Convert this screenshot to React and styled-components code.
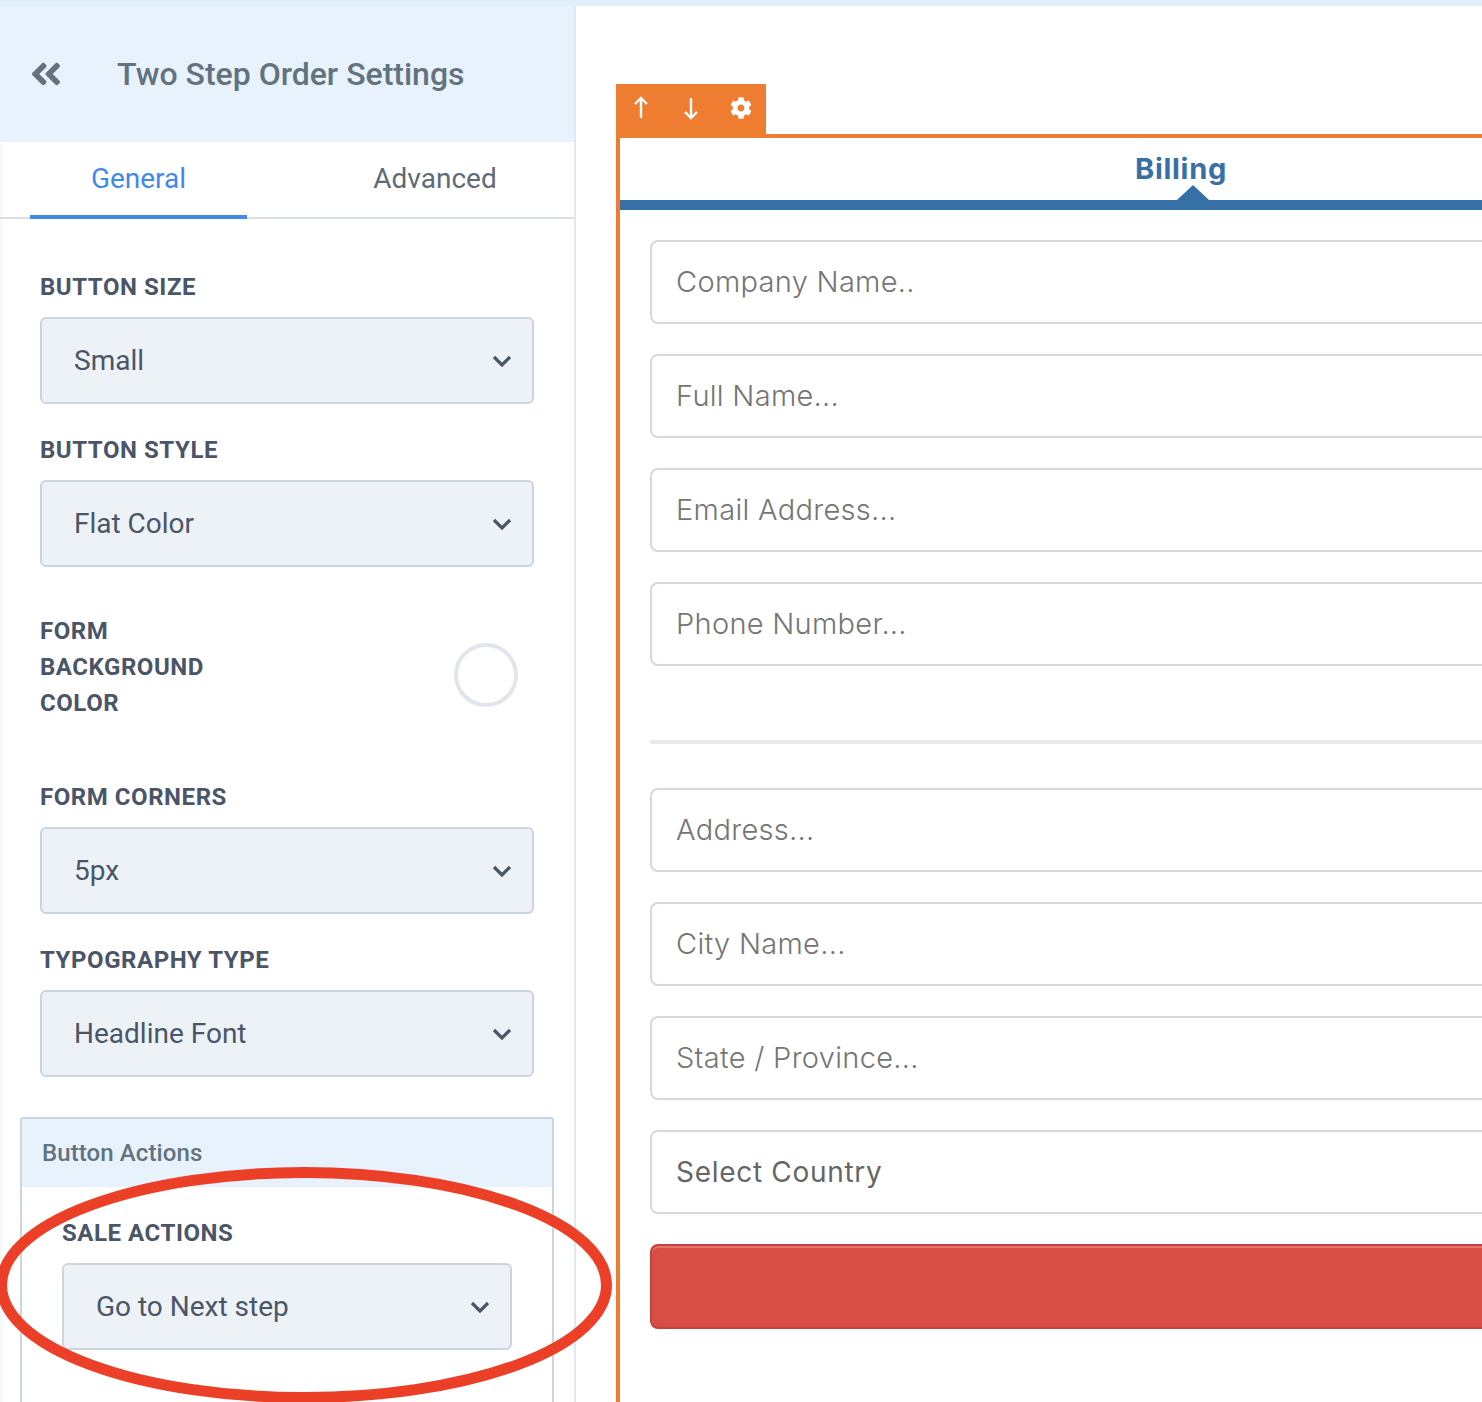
import React from 'react'
import styled, { createGlobalStyle } from 'styled-components'
import { FaAngleDoubleLeft, FaCog } from 'react-icons/fa'

const GlobalStyle = createGlobalStyle`
  html, body {
    margin: 0;
    height: 1402px;
    overflow: hidden;
    background: #fff;
  }
  * {
    box-sizing: border-box;
  }
`

const Page = styled.div`
  position: relative;
  width: 1482px;
  height: 1402px;
  overflow: hidden;
  font-family: Roboto, sans-serif;
`

const TopStrip = styled.div`
  height: 6px;
  background: #e1eefc;
`

const Columns = styled.div`
  display: flex;
  height: 1396px;
`

const Sidebar = styled.aside`
  width: 576px;
  flex: none;
  border-right: 2px solid #e2e8f0;
  background: #fff;
  box-shadow: inset 5px 0 5px -4px #f2f2f2;
`

const SidebarHeader = styled.div`
  height: 136px;
  display: flex;
  align-items: center;
  padding-left: 28px;
  background: #e7f2fd;
  color: #63727e;
`

const BackIcon = styled(FaAngleDoubleLeft)`
  width: 36px;
  height: 36px;
  flex: none;
`

const SidebarTitle = styled.h1`
  margin: 0 0 0 53px;
  font-size: 32px;
  font-weight: 500;
  line-height: 40px;
  color: #63727e;
`

const Tabs = styled.div`
  height: 77px;
  display: flex;
  padding-left: 30px;
  border-bottom: 2px solid #d9dfe6;
`

const Tab = styled.div`
  width: ${props => props.$width}px;
  height: 77px;
  padding-top: 17px;
  margin-left: ${props => props.$offset || 0}px;
  text-align: center;
  font-size: 28px;
  line-height: 40px;
  color: ${props => (props.$active ? '#4289ea' : '#5f6b76')};
  border-bottom: 4px solid ${props => (props.$active ? '#4289ea' : 'transparent')};
`

const Settings = styled.div`
  padding: 52px 40px 0;
`

const FieldLabel = styled.div`
  font-size: 24px;
  font-weight: 700;
  line-height: 32px;
  color: #4a5568;
  letter-spacing: 0.55px;
`

const Dropdown = styled.div`
  height: 87px;
  margin-top: 14px;
  margin-bottom: ${props => props.$gap || 0}px;
  display: flex;
  align-items: center;
  justify-content: space-between;
  padding: 0 19px 0 32px;
  background: #edf2f7;
  border: 2px solid #cbd5e0;
  border-radius: 6px;
  font-size: 28px;
  color: #4a5568;
`

const ChevronIcon = styled.svg`
  width: 22px;
  height: 14px;
  flex: none;
`

const ColorRow = styled.div`
  display: flex;
  align-items: center;
  justify-content: space-between;
  margin-top: 46px;
  padding-right: 16px;
`

const ColorLabel = styled(FieldLabel)`
  line-height: 36px;
`

const ColorSwatch = styled.div`
  width: 64px;
  height: 64px;
  margin-top: 16px;
  border: 4px solid #e2e6ec;
  border-radius: 50%;
`

const Spacer = styled.div`
  height: ${props => props.$size}px;
`

const ActionsPanel = styled.div`
  margin: 40px 20px 0;
  height: 400px;
  border: 2px solid #cbd5e0;
  border-radius: 3px;
`

const ActionsHeader = styled.div`
  height: 68px;
  display: flex;
  align-items: center;
  padding: 0 20px;
  background: #e7f2fd;
  font-size: 24px;
  font-weight: 500;
  letter-spacing: 0.1px;
  color: #63727e;
`

const ActionsBody = styled.div`
  padding: 30px 40px 0;
`

const Main = styled.main`
  flex: 1;
  min-width: 0;
  padding: 78px 0 0 40px;
`

const ToolBar = styled.div`
  width: 150px;
  height: 50px;
  display: flex;
  align-items: center;
  padding: 0 14px 3px 12px;
  justify-content: space-between;
  background: #ee7d32;
  color: #fff;
`

const ToolIcon = styled.svg`
  width: 26px;
  height: 26px;
  flex: none;
`

const GearIcon = styled(FaCog)`
  width: 22px;
  height: 22px;
  flex: none;
`

const Frame = styled.section`
  width: 1126px;
  height: 1270px;
  border-top: 4px solid #ee7d32;
  border-left: 4px solid #ee7d32;
`

const StepHeader = styled.div`
  position: relative;
  height: 72px;
  padding-top: 13px;
  text-align: center;
  border-bottom: 10px solid #3670a5;
`

const StepTitle = styled.span`
  font-family: Inter, sans-serif;
  font-size: 29px;
  font-weight: 700;
  line-height: 36px;
  letter-spacing: 0.7px;
  color: #3670a5;
`

const StepPointer = styled.div`
  position: absolute;
  left: 557px;
  bottom: 0;
  width: 0;
  height: 0;
  border-left: 16px solid transparent;
  border-right: 16px solid transparent;
  border-bottom: 15px solid #3670a5;
`

const FormBody = styled.div`
  padding: 30px 0 0 30px;
`

const TextField = styled.div`
  height: 84px;
  margin-bottom: ${props => props.$gap ?? 30}px;
  display: flex;
  align-items: center;
  padding: 0 0 ${props => (props.$filled ? 0 : 2)}px 24px;
  border: 2px solid #d6d8df;
  border-radius: 8px;
  font-family: Inter, sans-serif;
  font-size: ${props => (props.$filled ? 28 : 29)}px;
  font-weight: ${props => (props.$filled ? 400 : 300)};
  letter-spacing: ${props => (props.$filled ? 0.7 : 0.3)}px;
  color: ${props => (props.$filled ? '#666' : '#757575')};
`

const Divider = styled.div`
  height: 4px;
  margin: 43px 0 44px;
  background: #e8e9ec;
`

const SubmitButton = styled.div`
  height: 85px;
  background: #d84e46;
  border: 2px solid #c4423b;
  border-radius: 8px;
  box-shadow: inset 0 2px 0 #e4736d;
`

const CircleOverlay = styled.svg`
  position: absolute;
  left: 0;
  top: 1150px;
  width: 640px;
  height: 252px;
  pointer-events: none;
`

const Chevron = () => (
  <ChevronIcon viewBox="0 0 22 14" fill="none">
    <path d="M3 3l8 8 8-8" stroke="#4a5568" strokeWidth="3.2" />
  </ChevronIcon>
)

const Select = ({ value, gap }) => (
  <Dropdown $gap={gap}>
    {value}
    <Chevron />
  </Dropdown>
)

const companyFields = ['Company Name..', 'Full Name...', 'Email Address...', 'Phone Number...']
const addressFields = ['Address...', 'City Name...', 'State / Province...']

const App = () => (
  <Page>
    <GlobalStyle />
    <TopStrip />
    <Columns>
      <Sidebar>
        <SidebarHeader>
          <BackIcon />
          <SidebarTitle>Two Step Order Settings</SidebarTitle>
        </SidebarHeader>
        <Tabs>
          <Tab $active $width={217}>General</Tab>
          <Tab $width={216} $offset={80}>Advanced</Tab>
        </Tabs>
        <Settings>
          <FieldLabel>BUTTON SIZE</FieldLabel>
          <Select value="Small" gap={30} />
          <FieldLabel>BUTTON STYLE</FieldLabel>
          <Select value="Flat Color" />
          <ColorRow>
            <ColorLabel>
              FORM
              <br />
              BACKGROUND
              <br />
              COLOR
            </ColorLabel>
            <ColorSwatch />
          </ColorRow>
          <Spacer $size={60} />
          <FieldLabel>FORM CORNERS</FieldLabel>
          <Select value="5px" gap={30} />
          <FieldLabel>TYPOGRAPHY TYPE</FieldLabel>
          <Select value="Headline Font" />
        </Settings>
        <ActionsPanel>
          <ActionsHeader>Button Actions</ActionsHeader>
          <ActionsBody>
            <FieldLabel>SALE ACTIONS</FieldLabel>
            <Select value="Go to Next step" />
          </ActionsBody>
        </ActionsPanel>
      </Sidebar>
      <Main>
        <ToolBar>
          <ToolIcon viewBox="0 0 26 26" fill="none" stroke="#fff" strokeWidth="2.4">
            <path d="M13 23V4M7 9l6-6 6 6" />
          </ToolIcon>
          <ToolIcon viewBox="0 0 26 26" fill="none" stroke="#fff" strokeWidth="2.4">
            <path d="M12 3v19M6 17l6 6 6-6" />
          </ToolIcon>
          <GearIcon />
        </ToolBar>
        <Frame>
          <StepHeader>
            <StepTitle>Billing</StepTitle>
            <StepPointer />
          </StepHeader>
          <FormBody>
            {companyFields.map(text => (
              <TextField key={text} $gap={text === 'Phone Number...' ? 0 : 30}>{text}</TextField>
            ))}
            <Spacer $size={31} />
            <Divider />
            {addressFields.map(text => (
              <TextField key={text}>{text}</TextField>
            ))}
            <TextField $filled>Select Country</TextField>
            <SubmitButton />
          </FormBody>
        </Frame>
      </Main>
    </Columns>
    <CircleOverlay viewBox="0 0 640 252" fill="none">
      <ellipse cx="304" cy="135" rx="302.5" ry="112.5" stroke="#eb4027" strokeWidth="11" />
    </CircleOverlay>
  </Page>
)

export default App
